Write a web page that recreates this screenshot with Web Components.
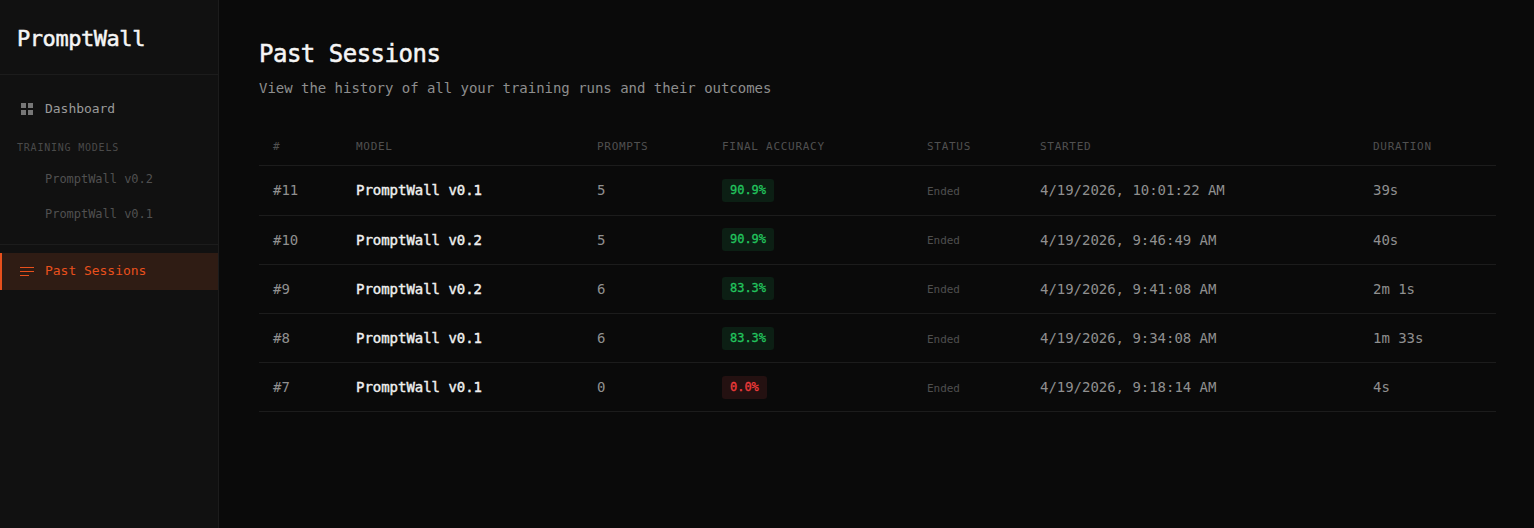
<!DOCTYPE html>
<html>
<head>
<meta charset="utf-8">
<title>PromptWall</title>
<style>
  html, body { margin: 0; height: 100%; background: #0a0a0a; }
  body { font-family: "DejaVu Sans Mono", "Liberation Mono", monospace; overflow: hidden; }
</style>
</head>
<body>
<app-shell>
  <side-bar slot="side">
    <nav-item icon="grid">Dashboard</nav-item>
    <nav-label>TRAINING MODELS</nav-label>
    <nav-item sub>PromptWall v0.2</nav-item>
    <nav-item sub>PromptWall v0.1</nav-item>
    <nav-item slot="bottom" icon="lines" active>Past Sessions</nav-item>
  </side-bar>
  <sessions-page>
    <session-table>
      <session-row num="#11" model="PromptWall v0.1" prompts="5" acc="90.9%" started="4/19/2026, 10:01:22 AM" dur="39s"></session-row>
      <session-row num="#10" model="PromptWall v0.2" prompts="5" acc="90.9%" started="4/19/2026, 9:46:49 AM" dur="40s"></session-row>
      <session-row num="#9" model="PromptWall v0.2" prompts="6" acc="83.3%" started="4/19/2026, 9:41:08 AM" dur="2m 1s"></session-row>
      <session-row num="#8" model="PromptWall v0.1" prompts="6" acc="83.3%" started="4/19/2026, 9:34:08 AM" dur="1m 33s"></session-row>
      <session-row num="#7" model="PromptWall v0.1" prompts="0" acc="0.0%" bad started="4/19/2026, 9:18:14 AM" dur="4s"></session-row>
    </session-table>
  </sessions-page>
</app-shell>

<script>
const COLS = "83px 241px 125px 205px 113px 333px 137px";

class AppShell extends HTMLElement {
  constructor() {
    super();
    this.attachShadow({ mode: "open" });
    this.shadowRoot.innerHTML = `
      <style>
        :host { display: flex; height: 528px; }
        main { flex: 1; min-width: 0; }
      </style>
      <slot name="side"></slot>
      <main><slot></slot></main>
    `;
  }
}

class SideBar extends HTMLElement {
  constructor() {
    super();
    this.attachShadow({ mode: "open" });
    this.shadowRoot.innerHTML = `
      <style>
        :host {
          display: block;
          width: 218px;
          flex: none;
          background: #111111;
          border-right: 1px solid #1c1c1c;
        }
        .logo {
          height: 75px;
          box-sizing: border-box;
          padding: 24px 17px 0;
          border-bottom: 1px solid #1c1c1c;
          font-size: 22px;
          line-height: 29px;
          font-weight: 400;
          -webkit-text-stroke: 0.5px;
          letter-spacing: -0.45px;
          color: #f5f5f5;
        }
        .top { padding: 15px 0 13px; border-bottom: 1px solid #1c1c1c; }
        .bottom { padding-top: 8px; }
      </style>
      <div class="logo">PromptWall</div>
      <div class="top"><slot></slot></div>
      <div class="bottom"><slot name="bottom"></slot></div>
    `;
  }
}

class NavItem extends HTMLElement {
  constructor() {
    super();
    this.attachShadow({ mode: "open" });
  }

  connectedCallback() {
    const icon = this.getAttribute("icon");
    let svg = "";
    if (icon === "grid") {
      svg = `<svg width="14" height="14" viewBox="0 0 14 14" fill="#777"><rect x="1" y="1" width="5" height="5"/><rect x="8" y="1" width="5" height="5"/><rect x="1" y="8" width="5" height="5"/><rect x="8" y="8" width="5" height="5"/></svg>`;
    }
    if (icon === "lines") {
      svg = `<svg width="14" height="14" viewBox="0 0 14 14" stroke="currentColor" stroke-width="1" fill="none"><path d="M0 2.5h14M0 6.5h14M0 10.5h9"/></svg>`;
    }
    this.shadowRoot.innerHTML = `
      <style>
        :host {
          display: flex;
          align-items: center;
          gap: 11px;
          height: 37px;
          box-sizing: border-box;
          padding-left: 20px;
          font-size: 13px;
          letter-spacing: -0.03px;
          color: #9a9a9a;
        }
        :host([sub]) { height: 35px; padding-left: 45px; font-size: 12px; color: #505050; }
        :host([active]) {
          color: #e8501c;
          background: #2f1c14;
          border-left: 2px solid #e8501c;
          padding-left: 18px;
        }
        :host([active]) span { margin-top: -2px; }
        svg { flex: none; display: block; }
      </style>
      ${svg}<span><slot></slot></span>
    `;
  }
}

class NavLabel extends HTMLElement {
  constructor() {
    super();
    this.attachShadow({ mode: "open" });
    this.shadowRoot.innerHTML = `
      <style>
        :host {
          display: block;
          padding: 14px 17px 7px;
          font-size: 10px;
          line-height: 13px;
          letter-spacing: 0.78px;
          color: #4a4a4a;
        }
      </style>
      <slot></slot>
    `;
  }
}

class SessionsPage extends HTMLElement {
  constructor() {
    super();
    this.attachShadow({ mode: "open" });
    this.shadowRoot.innerHTML = `
      <style>
        :host { display: block; padding: 39px 38px 0 40px; }
        h1 {
          margin: 0;
          font-size: 24px;
          line-height: 31px;
          font-weight: 400;
          -webkit-text-stroke: 0.5px;
          letter-spacing: -0.5px;
          color: #f5f5f5;
        }
        p {
          margin: 9px 0 30px;
          font-size: 14px;
          line-height: 18px;
          letter-spacing: -0.03px;
          color: #8e8e8e;
        }
      </style>
      <h1>Past Sessions</h1>
      <p>View the history of all your training runs and their outcomes</p>
      <slot></slot>
    `;
  }
}

class SessionTable extends HTMLElement {
  constructor() {
    super();
    this.attachShadow({ mode: "open" });
    const heads = ["#", "MODEL", "PROMPTS", "FINAL ACCURACY", "STATUS", "STARTED", "DURATION"];
    this.shadowRoot.innerHTML = `
      <style>
        :host { display: block; }
        .head {
          display: grid;
          grid-template-columns: ${COLS};
          height: 38.4px;
          align-items: center;
          border-bottom: 1px solid #1c1c1c;
          font-size: 11px;
          letter-spacing: 0.72px;
          color: #505050;
        }
        .head span { padding-left: 14px; }
      </style>
      <div class="head">${heads.map((h) => `<span>${h}</span>`).join("")}</div>
      <slot></slot>
    `;
  }
}

class SessionRow extends HTMLElement {
  constructor() {
    super();
    this.attachShadow({ mode: "open" });
  }

  connectedCallback() {
    const a = (name) => this.getAttribute(name);
    this.shadowRoot.innerHTML = `
      <style>
        :host {
          display: grid;
          grid-template-columns: ${COLS};
          height: 49.2px;
          box-sizing: border-box;
          align-items: center;
          border-bottom: 1px solid #1c1c1c;
          font-size: 14px;
          letter-spacing: -0.03px;
          color: #909090;
        }
        div { padding-left: 14px; }
        .model { -webkit-text-stroke: 0.4px; color: #f0f0f0; }
        .status { font-size: 11px; color: #4f4f4f; padding-top: 2px; }
        .badge {
          display: inline-block;
          padding: 0 8px;
          height: 23px;
          line-height: 23px;
          border-radius: 3px;
          font-size: 12px;
          -webkit-text-stroke: 0.3px;
          letter-spacing: -0.02px;
          background: #0c1f14;
          color: #22c55e;
        }
        :host([bad]) .badge { background: #241111; color: #ef3b3b; }
      </style>
      <div>${a("num")}</div>
      <div class="model">${a("model")}</div>
      <div>${a("prompts")}</div>
      <div><span class="badge">${a("acc")}</span></div>
      <div class="status">Ended</div>
      <div>${a("started")}</div>
      <div>${a("dur")}</div>
    `;
  }
}

customElements.define("app-shell", AppShell);
customElements.define("side-bar", SideBar);
customElements.define("nav-item", NavItem);
customElements.define("nav-label", NavLabel);
customElements.define("sessions-page", SessionsPage);
customElements.define("session-table", SessionTable);
customElements.define("session-row", SessionRow);
</script>
</body>
</html>
